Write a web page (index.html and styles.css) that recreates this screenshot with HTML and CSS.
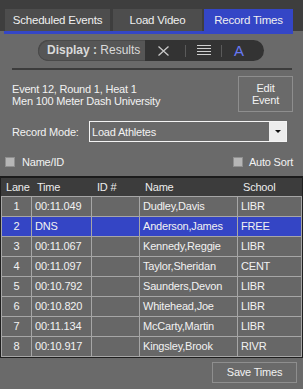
FILE: index.html
```html
<!DOCTYPE html>
<html>
<head>
<meta charset="utf-8">
<link rel="stylesheet" href="styles.css">
</head>
<body>
<div class="app">
  <div class="tabs">
    <div class="tab t1">Scheduled Events</div>
    <div class="tab t2">Load Video</div>
    <div class="tab t3 active">Record Times</div>
  </div>
  <div class="tabline"></div>

  <div class="pill">
    <div class="pill-left"><b>Display :</b> Results</div>
    <div class="pill-right">
      <svg class="ico-x" width="11" height="10" viewBox="0 0 11 10"><path d="M0.5 0.5 L10.5 9.5 M10.5 0.5 L0.5 9.5" stroke="#c9c9c9" stroke-width="1.3" fill="none"/></svg>
      <span class="sep"></span>
      <svg class="ico-menu" width="14" height="11" viewBox="0 0 14 11"><path d="M0 0.5 H14 M0 3.5 H14 M0 6.5 H14 M0 9.5 H14" stroke="#cfcfcf" stroke-width="1" fill="none"/></svg>
      <span class="sep sep2"></span>
      <span class="ico-a">A</span>
    </div>
  </div>

  <div class="rule"></div>

  <div class="info">
    <div class="event">Event 12, Round 1, Heat 1<br>Men 100 Meter Dash University</div>
    <div class="btn edit">Edit<br>Event</div>
  </div>

  <div class="mode">
    <span class="mode-label">Record Mode:</span>
    <div class="select"><span class="select-text">Load Athletes</span><span class="arrow"><span class="tri"></span></span></div>
  </div>

  <div class="checks">
    <label class="check"><span class="box"></span><span>Name/ID</span></label>
    <label class="check check-r"><span class="box"></span><span>Auto Sort</span></label>
  </div>

  <div class="grid">
    <div class="hdr">
      <div class="h lane">Lane</div>
      <div class="h">Time</div>
      <div class="h">ID #</div>
      <div class="h">Name</div>
      <div class="h">School</div>
    </div>
    <div class="row"><div class="c lane">1</div><div class="c">00:11.049</div><div class="c"></div><div class="c">Dudley,Davis</div><div class="c last">LIBR</div></div>
    <div class="row sel"><div class="c lane">2</div><div class="c">DNS</div><div class="c"></div><div class="c">Anderson,James</div><div class="c last">FREE</div></div>
    <div class="row"><div class="c lane">3</div><div class="c">00:11.067</div><div class="c"></div><div class="c">Kennedy,Reggie</div><div class="c last">LIBR</div></div>
    <div class="row"><div class="c lane">4</div><div class="c">00:11.097</div><div class="c"></div><div class="c">Taylor,Sheridan</div><div class="c last">CENT</div></div>
    <div class="row"><div class="c lane">5</div><div class="c">00:10.792</div><div class="c"></div><div class="c">Saunders,Devon</div><div class="c last">LIBR</div></div>
    <div class="row"><div class="c lane">6</div><div class="c">00:10.820</div><div class="c"></div><div class="c">Whitehead,Joe</div><div class="c last">LIBR</div></div>
    <div class="row"><div class="c lane">7</div><div class="c">00:11.134</div><div class="c"></div><div class="c">McCarty,Martin</div><div class="c last">LIBR</div></div>
    <div class="row end"><div class="c lane">8</div><div class="c">00:10.917</div><div class="c"></div><div class="c">Kingsley,Brook</div><div class="c last">RIVR</div></div>
  </div>

  <div class="footer">
    <div class="btn save">Save Times</div>
  </div>
</div>
</body>
</html>
```

FILE: styles.css
```css
html, body {
  margin: 0;
  padding: 0;
  background: #6a6a6a;
}
body {
  font-family: "Liberation Sans", Arial, sans-serif;
  font-size: 11px;
  color: #f2f2f2;
  letter-spacing: -0.2px;
}
.app {
  width: 303px;
  height: 389px;
  overflow: hidden;
}

/* tabs */
.tabs {
  height: 31px;
  box-sizing: border-box;
  padding: 9px 0 0 4px;
  background: #3e3e3e;
  display: flex;
  align-items: flex-end;
}
.tab {
  height: 22px;
  line-height: 22px;
  text-align: center;
  background: #4d4d4d;
  color: #f0f0f0;
  font-size: 11.5px;
}
.t1 { margin-left: 1px; width: 105px; }
.t2 { margin-left: 3px; width: 89px; }
.t3 { margin-left: 2px; width: 89px; }
.tab.active { background: #3446c6; }
.tabline {
  height: 3px;
  margin: 0 10px 0 4px;
  background: #3446c6;
}

/* display pill */
.pill {
  margin: 6px 0 0 38px;
  width: 226px;
  height: 21px;
  border-radius: 11px;
  overflow: hidden;
  display: flex;
  background: #333333;
}
.pill-left {
  width: 107px;
  box-sizing: border-box;
  padding-left: 9px;
  background: #565656;
  color: #dadada;
  font-size: 12px;
  line-height: 21px;
  letter-spacing: 0;
  border-radius: 11px 0 0 11px;
  box-shadow: inset 1px 1px 0 #4a4a4a, inset 0 -1px 0 #4a4a4a;
}
.pill-left b { font-weight: bold; }
.pill-right {
  flex: 1;
  display: flex;
  align-items: center;
}
.ico-x { margin-left: 13px; display: block; }
.sep {
  width: 1px;
  height: 12px;
  background: #5a5a5a;
  margin-left: 16px;
}
.ico-menu { margin-left: 11px; display: block; }
.sep2 { margin-left: 10px; }
.ico-a {
  margin-left: 12px;
  color: #6878f2;
  font-size: 15px;
  line-height: 21px;
  letter-spacing: 0;
}

.rule {
  height: 2px;
  margin: 7px 11px 0 12px;
  background: #3c3c3c;
}

/* info */
.info {
  display: flex;
  justify-content: space-between;
  padding: 0 10px 0 12px;
}
.event {
  margin-top: 13px;
  line-height: 12px;
}
.btn {
  box-sizing: border-box;
  border: 1px solid #8e8e8e;
  text-align: center;
  color: #f2f2f2;
}
.edit {
  margin-top: 6px;
  width: 55px;
  height: 36px;
  padding-top: 5px;
  line-height: 12px;
}

/* mode */
.mode {
  margin-top: 9px;
  display: flex;
  align-items: center;
  padding-left: 12px;
}
.mode-label { width: 77px; }
.select {
  width: 198px;
  height: 21px;
  box-sizing: border-box;
  border: 1px solid #f4f4f4;
  display: flex;
  align-items: center;
  padding-left: 2px;
}
.select-text { flex: 1; }
.arrow {
  width: 17px;
  height: 19px;
  background: #ededed;
  display: flex;
  align-items: center;
  justify-content: center;
}
.tri {
  width: 0;
  height: 0;
  border-left: 3px solid transparent;
  border-right: 3px solid transparent;
  border-top: 3px solid #111;
}

/* checks */
.checks {
  margin-top: 14px;
  display: flex;
  justify-content: space-between;
  padding: 0 10px 0 5px;
  line-height: 12px;
}
.check {
  display: flex;
  align-items: center;
}
.box {
  width: 10px;
  height: 10px;
  box-sizing: border-box;
  background: #b6b6b6;
  border: 1px solid #8f8f8f;
  margin-right: 7px;
}
.check-r .box { margin-right: 6px; }

/* grid */
.grid {
  margin-top: 8px;
  width: 303px;
  box-sizing: border-box;
  border: 1px solid #1f1f1f;
  border-top: 2px solid #1b1b1b;
  background: #3c3c3c;
}
.hdr, .row {
  display: grid;
  grid-template-columns: 30px 60px 48px 98px 65px;
}
.hdr {
  height: 18px;
  line-height: 18px;
}
.h { padding-left: 6px; color: #ececec; }
.h.lane { padding-left: 5px; }
.row { background: #676767; }
.row.sel { background: #3445c5; }
.c {
  height: 20px;
  box-sizing: border-box;
  border-left: 1px solid #a6a6a6;
  border-top: 1px solid #a6a6a6;
  padding-left: 3px;
  line-height: 19px;
  white-space: nowrap;
  overflow: hidden;
}
.c.lane { text-align: center; padding-left: 0; }
.c.last { border-right: 1px solid #a6a6a6; }
.row.end .c { border-bottom: 1px solid #a6a6a6; height: 21px; }

/* footer */
.footer {
  display: flex;
  justify-content: flex-end;
  padding-right: 6px;
  margin-top: 4px;
}
.save {
  width: 85px;
  height: 21px;
  line-height: 19px;
}
```
